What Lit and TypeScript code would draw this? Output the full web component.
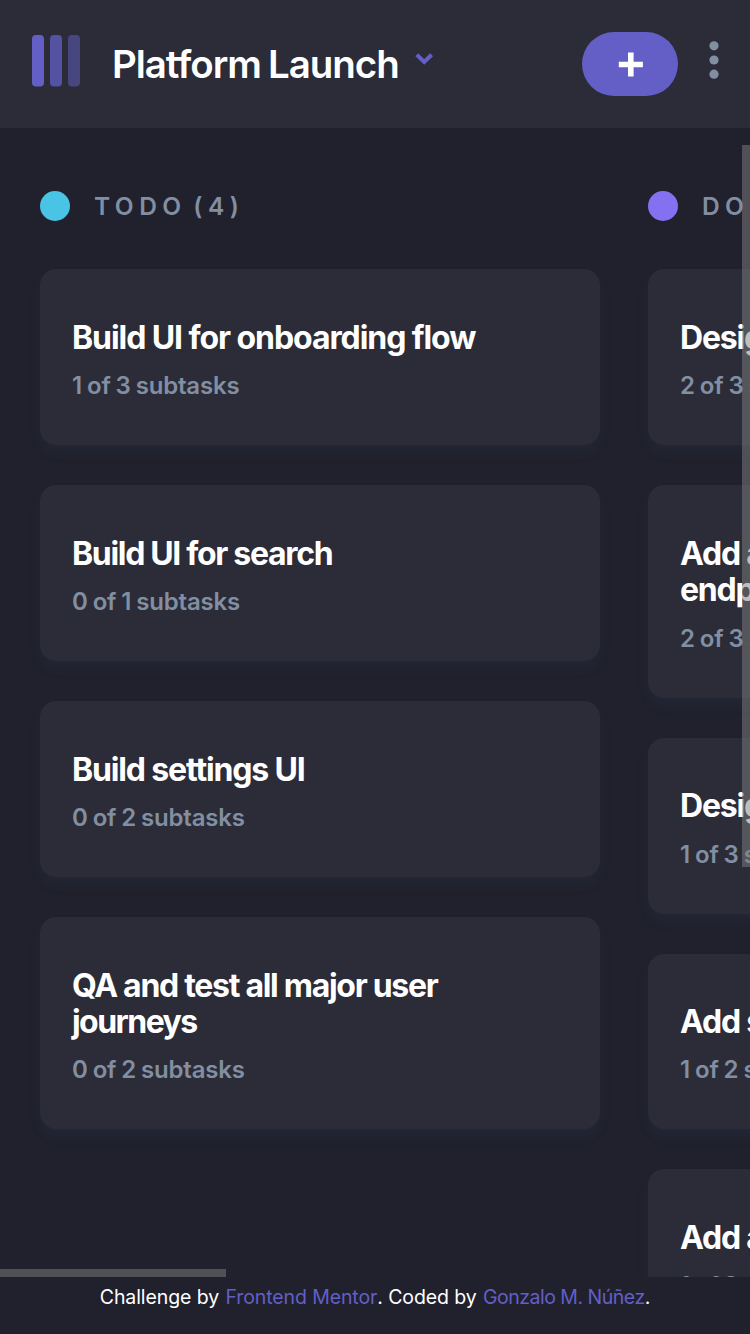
import { LitElement, html, css } from "lit";
import { customElement, property } from "lit/decorators.js";
import { styleMap } from "lit/directives/style-map.js";

interface Line {
  text: string;
  tracking: number;
}

interface Task {
  lines: Line[];
  done: number;
  total: number;
}

interface Column {
  name: string;
  color: string;
  tasks: Task[];
}

const line = (text: string, tracking = -1.2): Line => ({ text, tracking });

const COLUMNS: Column[] = [
  {
    name: "TODO (4)",
    color: "#49c4e5",
    tasks: [
      { lines: [line("Build UI for onboarding flow", -1.07)], done: 1, total: 3 },
      { lines: [line("Build UI for search", -1.32)], done: 0, total: 1 },
      { lines: [line("Build settings UI", -1.15)], done: 0, total: 2 },
      { lines: [line("QA and test all major user", -1.29), line("journeys", -1.55)], done: 0, total: 2 },
    ],
  },
  {
    name: "DOING (6)",
    color: "#8471f2",
    tasks: [
      { lines: [line("Design settings and search")], done: 2, total: 3 },
      { lines: [line("Add account management"), line("endpoints")], done: 2, total: 3 },
      { lines: [line("Design onboarding flow")], done: 1, total: 3 },
      { lines: [line("Add search endpoints")], done: 1, total: 2 },
      { lines: [line("Add authentication")], done: 1, total: 2 },
    ],
  },
];

@customElement("task-card")
export class TaskCard extends LitElement {
  @property({ attribute: false }) task!: Task;

  static styles = css`
    :host {
      display: block;
      box-sizing: border-box;
      padding: 50.7px 32px 44px;
      border-radius: 16px;
      background: #2b2c37;
      box-shadow: 0 8px 12px rgba(54, 78, 126, 0.1);
      white-space: nowrap;
    }
    .title {
      font-size: 32px;
      font-weight: 700;
      line-height: 36.6px;
      color: #fff;
    }
    .line {
      display: block;
    }
    .sub {
      margin-top: 14.7px;
      font-size: 24px;
      font-weight: 600;
      line-height: 30px;
      letter-spacing: -0.2px;
      word-spacing: -0.8px;
      color: #828fa3;
    }
  `;

  render() {
    const { lines, done, total } = this.task;
    return html`
      <div class="title">
        ${lines.map(
          (l) => html`<span class="line" style=${styleMap({ letterSpacing: `${l.tracking}px` })}>${l.text}</span>`
        )}
      </div>
      <div class="sub">${done} of ${total} subtasks</div>
    `;
  }
}

@customElement("app-root")
export class AppRoot extends LitElement {
  static styles = css`
    :host {
      display: flex;
      flex-direction: column;
      width: 750px;
      height: 1334px;
      overflow: hidden;
      background: #20212c;
      font-family: Inter, "Liberation Sans", sans-serif;
    }
    .top {
      display: flex;
      align-items: center;
      flex: none;
      height: 128px;
      box-sizing: border-box;
      padding: 0 31px 0 32px;
      background: #2b2c37;
    }
    .logo {
      margin-top: -6px;
    }
    .board-name {
      margin: 0 0 0 32px;
      width: 302px;
      font-size: 38.5px;
      font-weight: 600;
      letter-spacing: -1.05px;
      word-spacing: -1.5px;
      line-height: 48px;
      white-space: nowrap;
      color: #fff;
    }
    .chevron {
      margin-top: -10px;
    }
    .add {
      display: flex;
      align-items: center;
      justify-content: center;
      margin-left: auto;
      width: 96px;
      height: 64px;
      border: 0;
      padding: 0;
      border-radius: 32px;
      background: #635fc7;
    }
    .more {
      margin-left: 30.6px;
      margin-top: -8px;
    }
    .board {
      position: relative;
      display: flex;
      gap: 48px;
      flex: none;
      height: 1149px;
      box-sizing: border-box;
      padding: 62px 40px 0;
      overflow: hidden;
    }
    .column {
      flex: none;
      width: 560px;
    }
    .heading {
      display: flex;
      align-items: center;
      gap: 23.5px;
      height: 32px;
      margin-bottom: 47px;
      font-size: 24.5px;
      font-weight: 600;
      letter-spacing: 5.5px;
      word-spacing: -5px;
      white-space: nowrap;
      color: #828fa3;
    }
    .dot {
      width: 30.4px;
      height: 30.4px;
      border-radius: 50%;
    }
    .tasks {
      display: flex;
      flex-direction: column;
      gap: 40px;
    }
    .bar-y,
    .bar-x {
      position: absolute;
      background: rgba(128, 128, 128, 0.5);
    }
    .bar-y {
      right: 0;
      top: 17px;
      width: 8px;
      height: 722px;
    }
    .bar-x {
      left: 0;
      bottom: 0;
      width: 226px;
      height: 8px;
    }
    .credits {
      display: flex;
      justify-content: center;
      padding-top: 8px;
      font-size: 19.5px;
      line-height: 24px;
      letter-spacing: -0.1px;
      white-space: pre;
      color: #fff;
    }
    .link {
      color: #635fc7;
      letter-spacing: -0.1px;
      margin-left: 1px;
    }
    .author {
      letter-spacing: -0.5px;
    }
  `;

  render() {
    return html`
      <header class="top">
        <svg class="logo" width="48" height="52" viewBox="0 0 48 52" fill="#635fc7">
          <rect width="12" height="51.5" rx="4" />
          <rect x="18" width="12" height="51.5" rx="4" opacity="0.75" />
          <rect x="36" width="12" height="51.5" rx="4" opacity="0.5" />
        </svg>
        <h1 class="board-name">Platform Launch</h1>
        <svg class="chevron" width="20" height="14" viewBox="0 0 20 14">
          <path d="M2.8 2.8 10.2 10 17.6 2.8" fill="none" stroke="#635fc7" stroke-width="4" />
        </svg>
        <button class="add" aria-label="Add task">
          <svg width="25" height="25" viewBox="0 0 25 25" fill="#fff">
            <path d="M10 .4h5.6v9.3h9.3v5.6h-9.3v9.2H10v-9.2H.8V9.7H10z" />
          </svg>
        </button>
        <svg class="more" width="10" height="38" viewBox="0 0 10 38" fill="#828fa3">
          <circle cx="5" cy="4.8" r="4.6" />
          <circle cx="5" cy="19" r="4.6" />
          <circle cx="5" cy="33.2" r="4.6" />
        </svg>
      </header>
      <main class="board">
        ${COLUMNS.map(
          (c) => html`
            <section class="column">
              <div class="heading">
                <span class="dot" style=${styleMap({ background: c.color })}></span>${c.name}
              </div>
              <div class="tasks">${c.tasks.map((t) => html`<task-card .task=${t}></task-card>`)}</div>
            </section>
          `
        )}
        <div class="bar-y"></div>
        <div class="bar-x"></div>
      </main>
      <footer class="credits"><span>Challenge by </span><span class="link">Frontend Mentor</span><span>. Coded by </span><span class="link author">Gonzalo M. Núñez</span><span>.</span></footer>
    `;
  }
}
